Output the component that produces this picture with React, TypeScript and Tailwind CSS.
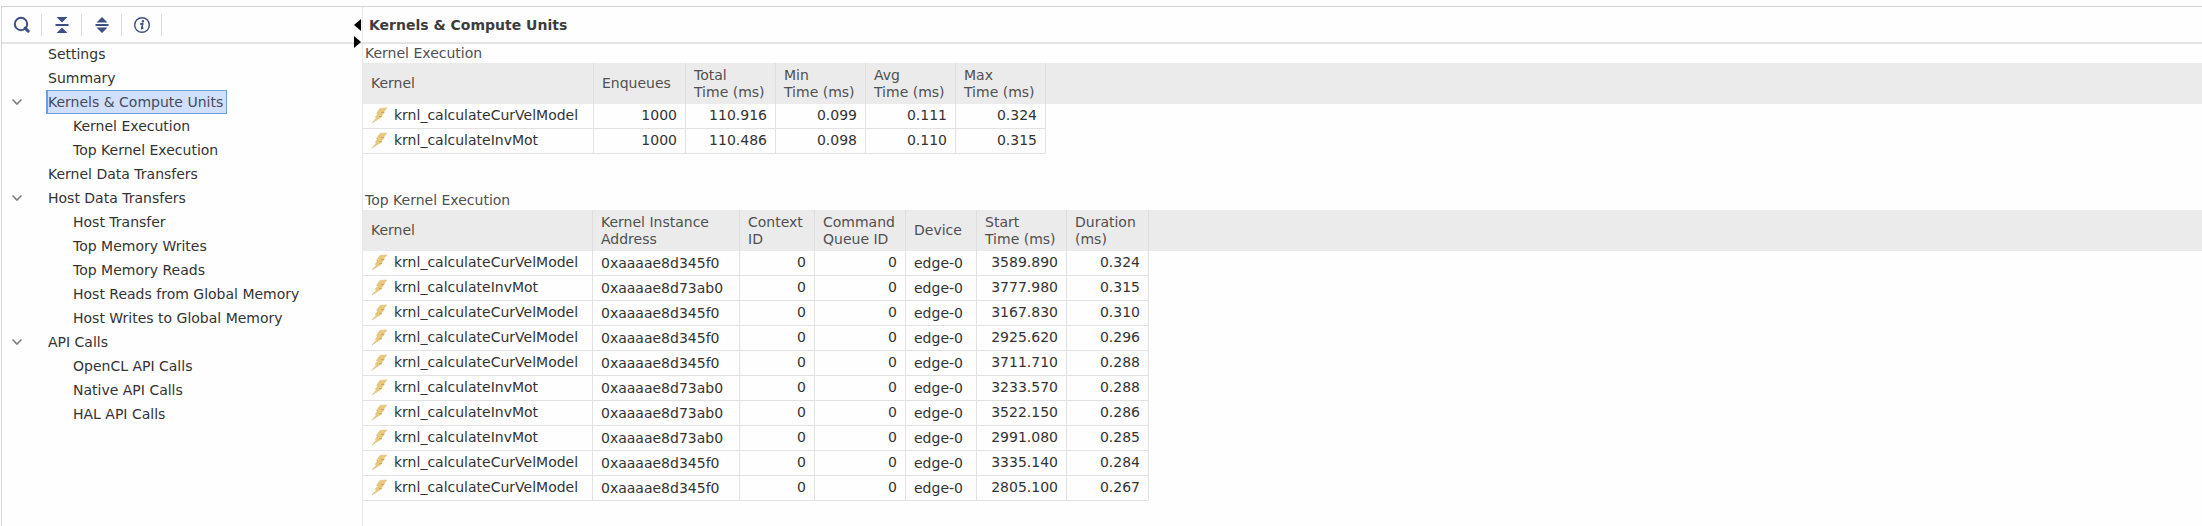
import React, { useState } from "react";

type Node = { label: string; children?: string[] };

const tree: Node[] = [
  { label: "Settings" },
  { label: "Summary" },
  { label: "Kernels & Compute Units", children: ["Kernel Execution", "Top Kernel Execution"] },
  { label: "Kernel Data Transfers" },
  {
    label: "Host Data Transfers",
    children: [
      "Host Transfer",
      "Top Memory Writes",
      "Top Memory Reads",
      "Host Reads from Global Memory",
      "Host Writes to Global Memory",
    ],
  },
  { label: "API Calls", children: ["OpenCL API Calls", "Native API Calls", "HAL API Calls"] },
];

type Column = { title: string[]; width: string; kind: "kernel" | "number" | "text" };

const executionColumns: Column[] = [
  { title: ["Kernel"], width: "w-[231px]", kind: "kernel" },
  { title: ["Enqueues"], width: "w-[92px]", kind: "number" },
  { title: ["Total", "Time (ms)"], width: "w-[90px]", kind: "number" },
  { title: ["Min", "Time (ms)"], width: "w-[90px]", kind: "number" },
  { title: ["Avg", "Time (ms)"], width: "w-[90px]", kind: "number" },
  { title: ["Max", "Time (ms)"], width: "w-[90px]", kind: "number" },
];

const executionRows = [
  ["krnl_calculateCurVelModel", "1000", "110.916", "0.099", "0.111", "0.324"],
  ["krnl_calculateInvMot", "1000", "110.486", "0.098", "0.110", "0.315"],
];

const topColumns: Column[] = [
  { title: ["Kernel"], width: "w-[230px]", kind: "kernel" },
  { title: ["Kernel Instance", "Address"], width: "w-[147px]", kind: "text" },
  { title: ["Context", "ID"], width: "w-[75px]", kind: "number" },
  { title: ["Command", "Queue ID"], width: "w-[91px]", kind: "number" },
  { title: ["Device"], width: "w-[71px]", kind: "text" },
  { title: ["Start", "Time (ms)"], width: "w-[90px]", kind: "number" },
  { title: ["Duration", "(ms)"], width: "w-[82px]", kind: "number" },
];

const CUR = ["krnl_calculateCurVelModel", "0xaaaae8d345f0", "0", "0", "edge-0"];
const INV = ["krnl_calculateInvMot", "0xaaaae8d73ab0", "0", "0", "edge-0"];

const topRows = [
  [...CUR, "3589.890", "0.324"],
  [...INV, "3777.980", "0.315"],
  [...CUR, "3167.830", "0.310"],
  [...CUR, "2925.620", "0.296"],
  [...CUR, "3711.710", "0.288"],
  [...INV, "3233.570", "0.288"],
  [...INV, "3522.150", "0.286"],
  [...INV, "2991.080", "0.285"],
  [...CUR, "3335.140", "0.284"],
  [...CUR, "2805.100", "0.267"],
];

function Bolt() {
  return (
    <svg width="17" height="17" viewBox="0 0 17 17" className="shrink-0" aria-hidden="true">
      <path
        d="M9 1.4 15.8 1 12.6 5 13.4 5.4 10.2 9 11 9.6 1 16 5.6 10.8 4.2 10.2 7 7 5.6 6.4Z"
        fill="#e9c877"
        stroke="#dcbc7c"
        strokeWidth=".6"
        strokeLinejoin="round"
      />
      <path d="M13 5.3 10 5.6M10.8 9.4 8 9.7" stroke="#c3a563" strokeWidth=".9" />
    </svg>
  );
}

function ReportTable({ title, columns, rows }: { title: string; columns: Column[]; rows: string[][] }) {
  return (
    <table className="w-full table-fixed border-separate border-spacing-0 text-left">
      <caption className="h-[19px] px-0.5 text-left leading-[19px] text-[#505050]">{title}</caption>
      <colgroup>
        {columns.map((c, i) => (
          <col key={i} className={c.width} />
        ))}
        <col />
      </colgroup>
      <thead>
        <tr className="h-[41px] bg-[#ebebeb] text-[#505050]">
          {columns.map((c, i) => (
            <th key={i} scope="col" className="border-r border-[#dedede] py-0 pl-2 font-normal leading-[17px] whitespace-nowrap">
              {c.title.map((line) => (
                <span key={line} className="block">
                  {line}
                </span>
              ))}
            </th>
          ))}
          <td />
        </tr>
      </thead>
      <tbody>
        {rows.map((row, r) => (
          <tr key={r} className="h-[25px] text-[#333333]">
            {row.map((value, i) => (
              <td
                key={i}
                className={
                  columns[i].kind === "number"
                    ? "border-r border-b border-[#e2e2e2] p-0 pr-2 pb-0.5 text-right leading-5"
                    : columns[i].kind === "text"
                      ? "border-r border-b border-[#e2e2e2] p-0 pl-2 leading-5"
                      : "border-r border-b border-[#e2e2e2] p-0 pl-2 pb-0.5 leading-5"
                }
              >
                {columns[i].kind === "kernel" ? (
                  <span className="flex items-center gap-1.5">
                    <Bolt />
                    {value}
                  </span>
                ) : (
                  value
                )}
              </td>
            ))}
            <td className="p-0" />
          </tr>
        ))}
      </tbody>
    </table>
  );
}

function ToolButton({ label, children }: { label: string; children: React.ReactNode }) {
  return (
    <button type="button" aria-label={label} className="flex h-[22px] w-10 items-center justify-center border-r border-[#dcdcdc]">
      {children}
    </button>
  );
}

export default function App() {
  const [selected, setSelected] = useState("Kernels & Compute Units");
  const [closed, setClosed] = useState<string[]>([]);
  const toggle = (label: string) =>
    setClosed((c) => (c.includes(label) ? c.filter((x) => x !== label) : [...c, label]));

  const item = (label: string) => (
    <button
      type="button"
      onClick={() => setSelected(label)}
      className={
        selected === label
          ? "h-6 border border-l-2 border-[#6a9fd8] bg-[#d0dffc] pr-[3px] text-left leading-5 text-[#454b5c]"
          : "h-6 border border-l-2 border-transparent pr-[3px] text-left leading-5"
      }
    >
      {label}
    </button>
  );

  return (
    <div className="flex min-h-screen flex-col bg-[#fefefe] pt-1.5 font-['DejaVu_Sans',sans-serif] text-[14px] text-[#333333]">
      <div className="ml-px flex grow border-t border-l border-[#d4d4d4]">
        <aside className="relative w-[361px] shrink-0 border-r border-[#e8e8e8]">
          <div className="flex h-[37px] items-center border-b-2 border-[#e4e4e4]">
            <ToolButton label="Search">
              <svg width="18" height="18" viewBox="0 0 18 18" aria-hidden="true">
                <circle cx="8" cy="8" r="6.2" fill="none" stroke="#3d5083" strokeWidth="2" />
                <path d="m12 12.2 3.2 3" stroke="#3d5083" strokeWidth="3" strokeLinecap="round" />
              </svg>
            </ToolButton>
            <ToolButton label="Collapse all">
              <svg width="14" height="18" viewBox="0 0 14 18" fill="#3d5083" aria-hidden="true">
                <path d="M1.5 1h11L7 6.4ZM.5 8h13v2H.5ZM1.5 17h11L7 11.6Z" />
              </svg>
            </ToolButton>
            <ToolButton label="Expand all">
              <svg width="14" height="18" viewBox="0 0 14 18" fill="#3d5083" aria-hidden="true">
                <path d="M7 1 12.5 6.5h-11ZM.5 8h13v2H.5ZM1.5 11.5h11L7 17Z" />
              </svg>
            </ToolButton>
            <ToolButton label="Information">
              <svg width="18" height="18" viewBox="0 0 18 18" aria-hidden="true">
                <circle cx="9" cy="9" r="7.3" fill="none" stroke="#3d5083" strokeWidth="1.4" />
                <circle cx="9.9" cy="5.2" r="1.2" fill="#3d5083" />
                <path d="M7.2 8.1 9.8 7.6 8.6 12.6 10.4 12" fill="none" stroke="#3d5083" strokeWidth="1.6" strokeLinejoin="round" />
              </svg>
            </ToolButton>
          </div>
          <div className="absolute top-3 right-px flex flex-col gap-[5px]">
            <button type="button" aria-label="Collapse left panel">
              <svg width="7" height="12" viewBox="0 0 7 12" className="block" aria-hidden="true">
                <path d="M7 0v12L0 6Z" />
              </svg>
            </button>
            <button type="button" aria-label="Expand left panel">
              <svg width="7" height="12" viewBox="0 0 7 12" className="block" aria-hidden="true">
                <path d="M0 0v12L7 6Z" />
              </svg>
            </button>
          </div>
          <ul className="-mt-0.5 flex flex-col">
            {tree.map((node) => (
              <li key={node.label}>
                <div className="flex h-6 items-center">
                  <span className="flex w-11 pl-[9px]">
                    {node.children && (
                      <button type="button" aria-label={"Toggle " + node.label} onClick={() => toggle(node.label)}>
                        <svg width="12" height="8" viewBox="0 0 12 8" className="block" aria-hidden="true">
                          <path d="m1.5 1.5 4.5 4.5 4.5-4.5" fill="none" stroke="#808080" strokeWidth="1.6" />
                        </svg>
                      </button>
                    )}
                  </span>
                  {item(node.label)}
                </div>
                {node.children && !closed.includes(node.label) && (
                  <ul className="pl-[69px]">
                    {node.children.map((child) => (
                      <li key={child} className="flex h-6 items-center">
                        {item(child)}
                      </li>
                    ))}
                  </ul>
                )}
              </li>
            ))}
          </ul>
        </aside>
        <main className="min-w-0 grow">
          <h1 className="flex h-[37px] items-center border-b-2 border-[#e4e4e4] pt-0.5 pl-1.5 font-bold text-[#3c3c3c]">
            Kernels &amp; Compute Units
          </h1>
          <div className="flex flex-col gap-[37px]">
            <ReportTable title="Kernel Execution" columns={executionColumns} rows={executionRows} />
            <ReportTable title="Top Kernel Execution" columns={topColumns} rows={topRows} />
          </div>
        </main>
      </div>
    </div>
  );
}
